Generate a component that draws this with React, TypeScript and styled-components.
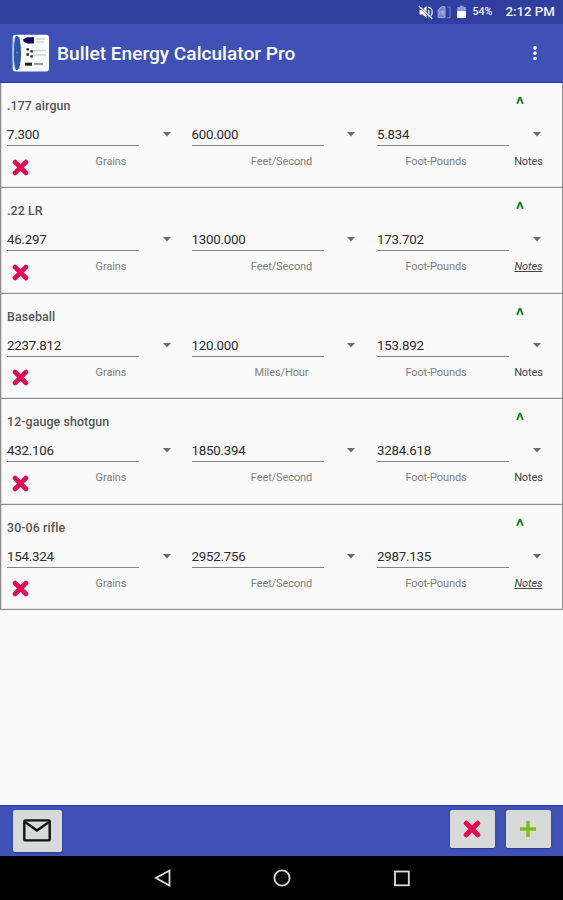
import React from "react";
import styled, { createGlobalStyle } from "styled-components";

const GlobalStyle = createGlobalStyle`
  * { box-sizing: border-box; }
  body { margin: 0; background: #fafafa; font-family: Roboto, "Liberation Sans", sans-serif; }
`;

const Screen = styled.div`
  width: 563px;
  height: 900px;
  display: flex;
  flex-direction: column;
  overflow: hidden;
  background: #fafafa;
`;

const StatusBar = styled.header`
  height: 23.5px;
  flex: none;
  display: flex;
  align-items: center;
  justify-content: flex-end;
  padding-right: 8px;
  background: #303f9f;
  color: #f2f4ff;

  svg { flex: none; display: block; }
`;

const Battery = styled.span`
  width: 21px;
  margin: 1px 12px 0 4px;
  font-size: 10.6px;
  line-height: 12px;
  font-weight: 500;
  white-space: nowrap;
`;

const Clock = styled.span`
  font-size: 13.3px;
  line-height: 16px;
  font-weight: 500;
  margin-top: 1px;
`;

const AppBar = styled.div`
  height: 59.5px;
  flex: none;
  display: flex;
  align-items: center;
  padding: 0 24px 0 12px;
  background: #3f51b5;
  border-bottom: 1.5px solid #283bad;
  color: #fff;
`;

const Title = styled.h1`
  flex: 1;
  margin: 3px 0 0 7px;
  font-size: 19.1px;
  line-height: 24px;
  font-weight: 500;
  white-space: nowrap;
`;

const Cards = styled.main`
  flex: 1;
  min-height: 0;
`;

const Card = styled.section`
  height: 105.4px;
  padding: 0 0 0 6px;
  border: solid #8e8e8e;
  border-width: 0 1px 1px;
  box-shadow: inset 1px 0 #d8d8d8, inset 0 -1px #e4e4e4;
`;

const CardHead = styled.div`
  height: 40px;
  display: flex;
  justify-content: space-between;
  padding: 15px 38px 0 0;

  svg { margin-top: -2px; }
`;

const Name = styled.div`
  font-size: 12.4px;
  line-height: 16px;
  color: #555;
  font-weight: 500;
  letter-spacing: 0.09px;
`;

const Fields = styled.div`
  display: grid;
  grid-template-columns: 184.5px 185.5px 1fr;
  height: 23px;
`;

const Field = styled.div`
  display: flex;
  align-items: center;
`;

const Value = styled.div`
  width: 132px;
  height: 23px;
  padding-top: 4px;
  border-bottom: 1px solid #858585;
  font-size: 13.3px;
  line-height: 16px;
  letter-spacing: -0.23px;
  color: #2b2b2b;
  margin-right: 23.5px;
`;

const Labels = styled.div`
  display: grid;
  grid-template-columns: 45px 118px 52px 119px 36px 118px 7px 53px;
  align-items: start;
  padding-top: 9px;
`;

const Unit = styled.span<{ $column: number }>`
  grid-column: ${(p) => p.$column};
  grid-row: 1;
  justify-self: center;
  font-size: 11px;
  line-height: 14px;
  letter-spacing: -0.1px;
  color: #808080;
  white-space: nowrap;
`;

const Notes = styled(Unit)<{ $filled?: boolean }>`
  color: #444;
  font-style: ${(p) => (p.$filled ? "italic" : "normal")};
  text-decoration: ${(p) => (p.$filled ? "underline" : "none")};
`;

const Remove = styled.div`
  grid-column: 1;
  grid-row: 1;
  height: 14px;
  padding: 3.5px 0 0 5px;
`;

const Toolbar = styled.footer`
  height: 51px;
  flex: none;
  display: flex;
  align-items: flex-start;
  gap: 11px;
  padding: 4px 12px 0 13px;
  background: #3f51b5;
  border-top: 1px solid #283bad;
`;

const ToolButton = styled.button<{ $wide?: boolean }>`
  width: ${(p) => (p.$wide ? 48.5 : 45)}px;
  height: ${(p) => (p.$wide ? 42 : 38)}px;
  margin-right: ${(p) => (p.$wide ? "auto" : "0")};
  display: flex;
  align-items: center;
  justify-content: center;
  padding: 0 1px 1px 0;
  border: 0;
  border-radius: 2px;
  background: #d8dada;
  box-shadow: 0 1px 2px #28378f;
`;

const NavBar = styled.nav`
  height: 44px;
  flex: none;
  display: flex;
  justify-content: center;
  align-items: center;
  gap: 100px;
  background: #000;
`;

const Cross = ({ size = 17 }: { size?: number }) => (
  <svg width={size} height={size} viewBox="0 0 17 17" display="block">
    <path d="M3.1 3.1L13.9 13.9M13.9 3.1L3.1 13.9" stroke="#e5094f" strokeWidth="4.8" strokeLinecap="round" />
  </svg>
);

const Arrow = () => (
  <svg width="8" height="5" viewBox="0 0 8 5">
    <path d="M0 .1H8L4 4.4Z" fill="#6b6b6b" />
  </svg>
);

const Caret = () => (
  <svg width="8" height="9" viewBox="0 0 8 9">
    <path d="M1.2 7.9L3.6 1.8H4.4L6.8 7.9" fill="none" stroke="#16861b" strokeWidth="1.9" />
  </svg>
);

const Logo = () => (
  <svg width="38" height="38" viewBox="0 0 38 38">
    <rect x=".7" y=".8" width="36.3" height="36.6" rx="3" fill="#fafbff" />
    <ellipse cx="4.8" cy="19" rx="3.6" ry="17.2" fill="#2559b4" />
    <path d="M2.3 4Q-.3 19 2.3 34" fill="none" stroke="#b7cff5" strokeWidth="1.4" />
    <path d="M6.8 3Q10.3 19 6.8 35" fill="none" stroke="#173572" strokeWidth=".8" />
    <circle cx="5" cy="18.5" r="1" fill="#c06c61" />
    <path d="M22 3.2V9.5H15L11.3 7.5V5.2L15 3.2Z" fill="#0c0c60" />
    <path d="M24 5H33M24 8H32M21 16.5H34M21 21H34" stroke="#d1d2d5" strokeWidth="1.5" />
    <path d="M22 30H31" stroke="#999b9f" strokeWidth="2" />
    <path d="M14.5 15.3H17M18.3 17.4H20.8M14.5 20.5H17M18.3 22.3H20.8" stroke="#20242b" strokeWidth="2.3" />
    <path d="M13 30.2H20" stroke="#1d2712" strokeWidth="3" />
  </svg>
);

const StatusIcons = () => (
  <svg width="51" height="18" viewBox="0 0 51 18">
    <path d="M2.5 6.8H5.3L9.5 3V15L5.3 11.5H2.5Z" fill="#fff" />
    <path d="M11 4.2Q15.2 5.2 15.2 9T11.5 14M11 7Q13 8.5 11.4 11" stroke="#e7eaff" fill="none" strokeWidth="1.3" />
    <path d="M2.5 3.5L15 15.6" stroke="#303f9f" strokeWidth="2.2" />
    <path d="M1.8 3L15.2 15.8" stroke="#fff" strokeWidth="1.5" />
    <path d="M21.2 7L24.2 3.7H28V14.6H21.2ZM22.8 12V8M25 12V7M26.5 12V8" fill="#7582c7" stroke="#9da7de" />
    <path d="M30.5 4H33V14.6H29.5" stroke="#7380c4" fill="none" />
    <path d="M24.4 9.3L26.7 7L25.5 10Z" fill="#c7cdf2" />
    <path d="M42.8 2.8H46.5V4H49V15H40.2V4H42.8Z" fill="#8e99d3" />
    <path d="M40.2 8H49V15H40.2Z" fill="#fff" />
  </svg>
);

const records = [
  { name: ".177 airgun", values: ["7.300", "600.000", "5.834"], speed: "Feet/Second", noted: false },
  { name: ".22 LR", values: ["46.297", "1300.000", "173.702"], speed: "Feet/Second", noted: true },
  { name: "Baseball", values: ["2237.812", "120.000", "153.892"], speed: "Miles/Hour", noted: false },
  { name: "12-gauge shotgun", values: ["432.106", "1850.394", "3284.618"], speed: "Feet/Second", noted: false },
  { name: "30-06 rifle", values: ["154.324", "2952.756", "2987.135"], speed: "Feet/Second", noted: true },
];

export default function App() {
  return (
    <Screen>
      <GlobalStyle />
      <StatusBar>
        <StatusIcons />
        <Battery>54%</Battery>
        <Clock>2:12 PM</Clock>
      </StatusBar>
      <AppBar>
        <Logo />
        <Title>Bullet Energy Calculator Pro</Title>
        <svg width="8" height="18" viewBox="0 0 8 18" fill="#fff">
          <circle cx="4" cy="3.9" r="1.8" />
          <circle cx="4" cy="9.2" r="1.8" />
          <circle cx="4" cy="14.5" r="1.8" />
        </svg>
      </AppBar>
      <Cards>
        {records.map((record) => (
          <Card key={record.name}>
            <CardHead>
              <Name>{record.name}</Name>
              <Caret />
            </CardHead>
            <Fields>
              {record.values.map((value) => (
                <Field key={value}>
                  <Value>{value}</Value>
                  <Arrow />
                </Field>
              ))}
            </Fields>
            <Labels>
              <Remove><Cross /></Remove>
              <Unit $column={2}>Grains</Unit>
              <Unit $column={4}>{record.speed}</Unit>
              <Unit $column={6}>Foot-Pounds</Unit>
              <Notes $column={8} $filled={record.noted}>Notes</Notes>
            </Labels>
          </Card>
        ))}
      </Cards>
      <Toolbar>
        <ToolButton $wide aria-label="Email">
          <svg width="28" height="23" viewBox="0 0 28 23" fill="none" stroke="#111" strokeWidth="2.4">
            <rect x="1.3" y="1.4" width="25.4" height="20" rx="1" />
            <path d="M2 3L14 11.5L26 3" />
          </svg>
        </ToolButton>
        <ToolButton aria-label="Delete"><Cross size={18} /></ToolButton>
        <ToolButton aria-label="Add">
          <svg width="18" height="18" viewBox="0 0 18 18">
            <path d="M9 1V17M1 9H17" stroke="#79bd16" strokeWidth="3.4" />
          </svg>
        </ToolButton>
      </Toolbar>
      <NavBar>
        <svg width="20" height="20" viewBox="0 0 20 20" fill="none" stroke="#ddd" strokeWidth="1.8">
          <path d="M17.5 2.5V17.5L4 10Z" />
        </svg>
        <svg width="20" height="20" viewBox="0 0 20 20" fill="none" stroke="#ddd" strokeWidth="1.8">
          <circle cx="10" cy="10" r="7.6" />
        </svg>
        <svg width="20" height="20" viewBox="0 0 20 20" fill="none" stroke="#ddd" strokeWidth="1.8">
          <rect x="3" y="3.5" width="13.8" height="13.8" />
        </svg>
      </NavBar>
    </Screen>
  );
}
